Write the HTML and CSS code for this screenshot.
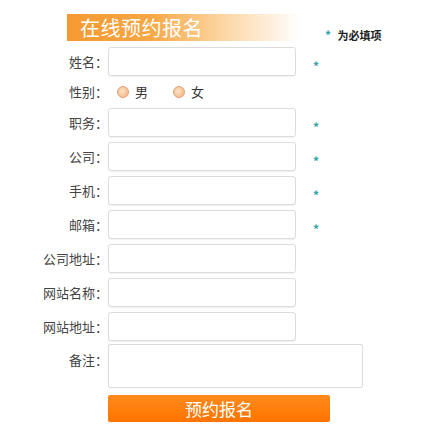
FILE: index.html
```html
<!DOCTYPE html>
<html lang="zh-CN">
<head>
  <meta charset="utf-8"/>
  <title>在线预约报名</title>
  <link rel="stylesheet" href="styles.css">
</head>
<body>
  <div class="signup">
    <div class="signup-head">
      <div class="banner">在线预约报名</div>
      <div class="note"><span class="star">*</span> 为必填项</div>
    </div>

    <form class="form">
      <div class="row"><label>姓名：</label><input type="text"/><span class="star">*</span></div>
      <div class="row gender">
        <label>性别：</label>
        <span class="radio"><i></i>男</span>
        <span class="radio"><i></i>女</span>
      </div>
      <div class="row"><label>职务：</label><input type="text"/><span class="star">*</span></div>
      <div class="row"><label>公司：</label><input type="text"/><span class="star">*</span></div>
      <div class="row"><label>手机：</label><input type="text"/><span class="star">*</span></div>
      <div class="row"><label>邮箱：</label><input type="text"/><span class="star">*</span></div>
      <div class="row"><label>公司地址：</label><input type="text"/></div>
      <div class="row"><label>网站名称：</label><input type="text"/></div>
      <div class="row"><label>网站地址：</label><input type="text"/></div>
      <div class="row memo"><label>备注：</label><textarea></textarea></div>
      <div class="row submit"><button type="button">预约报名</button></div>
    </form>
  </div>
</body>
</html>
```

FILE: styles.css
```css
body { margin:0; background:#fff; color:#444; font-family:"Noto Sans CJK SC", "Noto Sans", sans-serif; font-size:13px; }
.signup { padding-top:14px; }

.signup-head { display:flex; align-items:flex-end; margin-bottom:6px; }
.banner { margin-left:67px; width:220px; height:27px; line-height:28px; padding-left:13px; color:#fff; font-size:20px; letter-spacing:0.5px;
  background:linear-gradient(to right, #f59a32 0%, #f7a643 35%, #fbcf94 62%, #fff 100%); }
.note { margin-left:25px; margin-bottom:-2px; font-size:11px; font-weight:bold; color:#222; }
.note .star { margin-right:4px; }
.star { color:#2fa3aa; font-weight:bold; font-size:12px; }

.row { display:flex; align-items:center; margin-bottom:5px; }
.row label { width:108px; text-align:right; flex-shrink:0; color:#444; }
.row input { width:188px; height:29px; box-sizing:border-box; border:1px solid #dcdcdc; border-radius:3px; box-shadow:0 1px 1px rgba(0,0,0,0.06); margin:0; }
.row .star { margin-left:17px; padding-top:7px; }

.gender { height:21px; margin-bottom:6px; }
.radio { display:flex; align-items:center; margin-left:9px; margin-right:16px; color:#333; }
.radio i { display:inline-block; width:10px; height:10px; border-radius:50%; border:1px solid #e3a070; margin-right:6px;
  background:radial-gradient(circle at 40% 40%, #fde3c8, #f2b07a); }

.memo { align-items:flex-start; margin-top:-2px; }
.memo label { padding-top:6px; }
.memo textarea { width:255px; height:44px; box-sizing:border-box; border:1px solid #dcdcdc; border-radius:2px; margin:0; resize:none; }

.submit { padding-left:108px; margin-top:7px; }
.submit button { width:222px; height:27px; border:none; border-radius:2px; color:#fff; font-family:inherit; font-size:17px; cursor:pointer;
  background:linear-gradient(#ff8a1a, #ff7400); }
```
